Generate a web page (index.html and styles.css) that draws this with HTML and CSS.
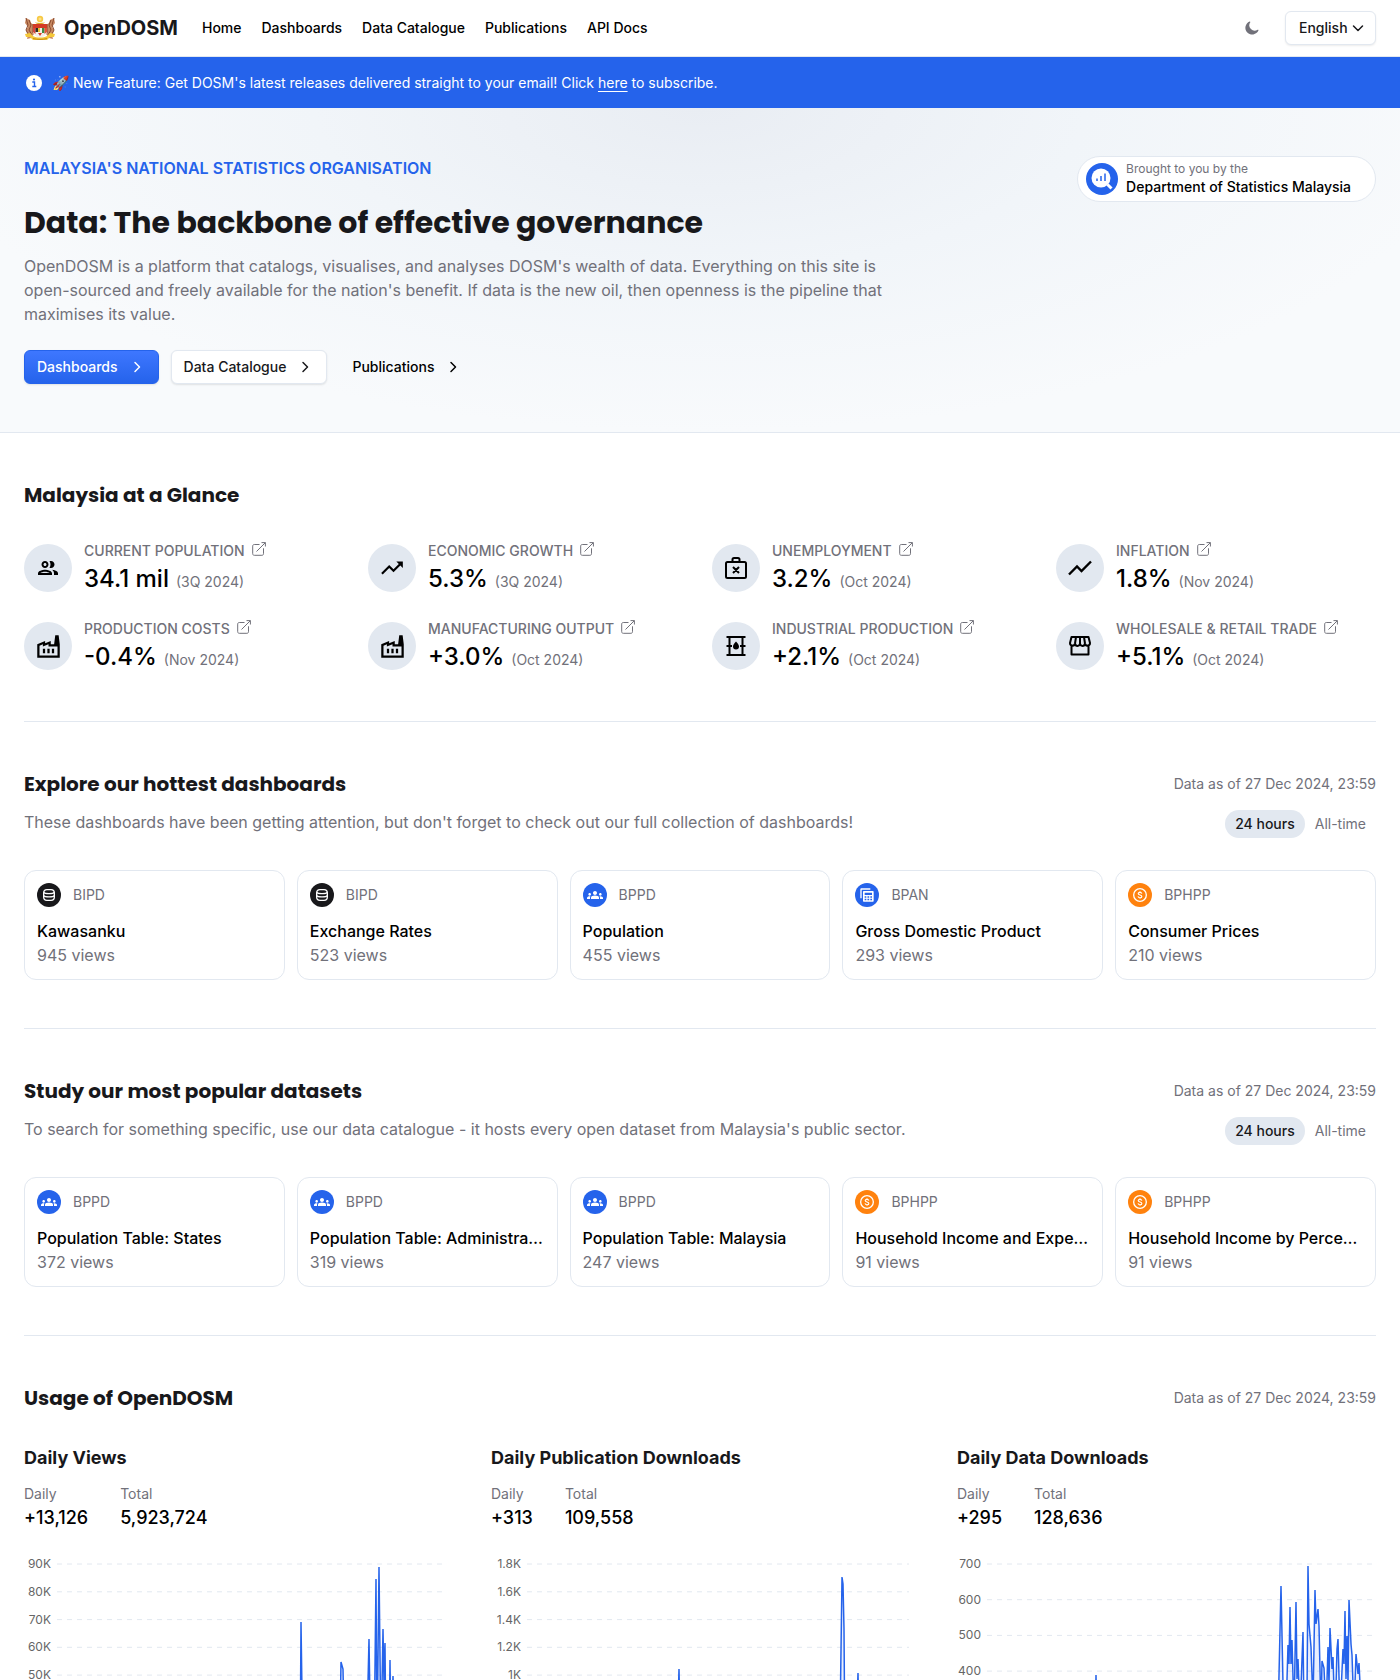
FILE: index.html
```html
<!DOCTYPE html>
<html lang="en">

<head>
    <meta charset="UTF-8">
    <meta name="viewport" content="width=device-width, initial-scale=1.0">
    <title>OpenDOSM</title>
    <link rel="stylesheet" href="styles.css">
</head>

<body>
    <!-- shared icons -->
    <svg class="sprite" aria-hidden="true">
        <symbol id="chevron" viewBox="0 0 20 20">
            <path d="M8 5.5l4.5 4.5L8 14.500" fill="none" stroke="currentColor" stroke-width="1.5" stroke-linecap="round" stroke-linejoin="round" />
        </symbol>
        <symbol id="external" viewBox="0 0 14 14">
            <path d="M7.500 2.500H2.300C1.300 2.500.7 3.100.7 4.100v7.600c0 1 .6 1.600 1.600 1.600h7.600c1 0 1.600-.6 1.600-1.600V6.300M4.500 9.500L13.300.700M9.500.6h3.900v3.900" fill="none" stroke="currentColor" stroke-width="1" />
        </symbol>
        <symbol id="factory" viewBox="0 0 24 24">
            <path d="M22 22H2V10l7-3v2l5-2v3h3l1-8h3l1 8v12zM4 20h16v-8h-8v-2l-5 2v-2l-3 1.300V20zm7-2h2v-4h-2v4zm-4 0h2v-4H7v4zm10-4h-2v4h2v-4z" />
        </symbol>
        <symbol id="database" viewBox="0 0 24 24">
            <rect x="4" y="4" width="16" height="16" rx="5" fill="none" stroke="currentColor" stroke-width="2" />
            <path d="M4 8c2 2.500 14 2.500 16 0M4 13c2 2.500 14 2.500 16 0" fill="none" stroke="currentColor" stroke-width="2" />
        </symbol>
        <symbol id="people" viewBox="0 0 24 24">
            <path d="M12 12.750c1.630 0 3.070.39 4.240.9 1.080.48 1.760 1.560 1.760 2.730V18H6v-1.610c0-1.180.68-2.260 1.760-2.730 1.170-.52 2.610-.91 4.240-.91zM4 13c1.100 0 2-.9 2-2s-.9-2-2-2-2 .9-2 2 .9 2 2 2zm1.130 1.100C4.760 14.040 4.390 14 4 14c-.99 0-1.930.21-2.780.58C.48 14.900 0 15.620 0 16.430V18h4.500v-1.610c0-.83.23-1.610.63-2.290zM20 13c1.100 0 2-.9 2-2s-.9-2-2-2-2 .9-2 2 .9 2 2 2zm4 3.430c0-.81-.48-1.530-1.220-1.850A6.950 6.950 0 0020 14c-.39 0-.76.04-1.130.1.4.68.63 1.460.63 2.290V18H24v-1.570zM12 6c1.660 0 3 1.340 3 3s-1.340 3-3 3-3-1.340-3-3 1.340-3 3-3z" />
        </symbol>
        <symbol id="calculator" viewBox="0 0 24 24">
            <path d="M2 17V3.500C2 2.500 2.500 2 3.500 2H17v2H4v13z" />
            <path fill-rule="evenodd" d="M7.500 6h13c.9 0 1.500.6 1.500 1.500v13c0 .9-.6 1.500-1.500 1.500h-13c-.9 0-1.500-.6-1.500-1.500v-13C6 6.600 6.600 6 7.500 6zM8.500 8.500v3.500h11V8.500zm0 5.500v2h2.500v-2zm4.200 0v2h2.600v-2zm4.300 0v2h2.500v-2zm-8.500 3.800v2H11v-2zm4.200 0v2h2.600v-2zm4.300 0v2h2.500v-2z" />
        </symbol>
        <symbol id="coin" viewBox="0 0 24 24">
            <circle cx="12" cy="12" r="9.500" fill="none" stroke="currentColor" stroke-width="2" />
            <path d="M14.800 9.800c-.3-1.100-1.300-1.800-2.800-1.800s-2.700.7-2.700 1.900c0 2.800 5.500 1.300 5.500 4.200 0 1.300-1.300 2-2.800 2s-2.700-.7-3-2M12 6.200V8M12 16v1.800" fill="none" stroke="currentColor" stroke-width="1.700" />
        </symbol>
    </svg>

    <header class="header">
        <a class="brand" href="#">
            <svg width="32" height="26" viewBox="0 0 32 26" aria-hidden="true">
                <!-- tigers -->
                <path d="M2 3l4 2 1 3 3 2v9l-3 4-4 1 1-4-2-5 2-3-3-4z" fill="#c98a62" />
                <path d="M30 3l-4 2-1 3-3 2v9l3 4 4 1-1-4 2-5-2-3 3-4z" fill="#c98a62" />
                <path d="M2 3l2 7-2 5 2 4M5 5l2 5-2 5 3 5M9 9v9" stroke="#8a4a30" fill="none" />
                <path d="M30 3l-2 7 2 5-2 4M27 5l-2 5 2 5-3 5M23 9v9" stroke="#8a4a30" fill="none" />
                <!-- crescent and star -->
                <path d="M11 7c1 3 9 3 10 0-1 1.200-9 1.200-10 0z" fill="#d9a520" />
                <circle cx="16" cy="4" r="3.200" fill="#f7c945" />
                <circle cx="16" cy="4" r="1.500" fill="#fbe08a" />
                <!-- shield -->
                <path d="M9 9h14v7c0 4-4 6-7 7-3-1-7-3-7-7z" fill="#f5efe8" />
                <path d="M9 9h14v4H9z" fill="#d43a26" />
                <path d="M9 13h2.500v6L9 17z" fill="#d8483a" />
                <path d="M11.500 13H14v4h-2.500z" fill="#2a2a2a" />
                <path d="M14 13h2v4h-2z" fill="#e9c233" />
                <path d="M18 13h2.500v5H18z" fill="#3c8a45" />
                <path d="M20.500 13H23v4l-2.500 2z" fill="#e2553a" />
                <path d="M14 18h4l-2 3z" fill="#d43a26" />
                <!-- ribbon -->
                <path d="M1 19l5-1 3 3c4 2 10 2 14 0l3-3 5 1-1 3h-4l-3 3H9l-3-3H2z" fill="#f5c838" />
                <path d="M9 23.500c4 1.200 10 1.200 14 0" stroke="#c58b16" fill="none" />
            </svg>
            <span>OpenDOSM</span>
        </a>
        <nav class="nav">
            <a href="#">Home</a>
            <a href="#">Dashboards</a>
            <a href="#">Data Catalogue</a>
            <a href="#">Publications</a>
            <a href="#">API Docs</a>
        </nav>
        <div class="header-actions">
            <button class="theme-toggle" type="button" aria-label="Toggle theme">
                <svg width="14" height="14" viewBox="0 0 14 14" aria-hidden="true">
                    <path d="M4.600.5a.6.6 0 01.7.8A5.300 5.300 0 0012.600 8.700a.6.6 0 01.8.8A6.800 6.800 0 114.600.5z" fill="currentColor" />
                </svg>
            </button>
            <div class="language">
                <select aria-label="Language">
                    <option>English</option>
                </select>
                <svg width="12" height="12" viewBox="0 0 12 12" aria-hidden="true">
                    <path d="M1.500 4L6 8.500 10.500 4" fill="none" stroke="currentColor" stroke-width="1.500" stroke-linecap="round" stroke-linejoin="round" />
                </svg>
            </div>
        </div>
    </header>

    <div class="banner">
        <svg width="20" height="20" viewBox="0 0 20 20" aria-hidden="true">
            <circle cx="10" cy="10" r="8" fill="#fff" />
            <circle cx="10" cy="6.500" r="1.100" fill="#2563eb" />
            <path d="M8.300 9h2.200v4.500M8.300 13.500h4" stroke="#2563eb" stroke-width="1.400" fill="none" />
        </svg>
        <p>🚀 New Feature: Get DOSM's latest releases delivered straight to your email! Click <a href="#">here</a> to subscribe.</p>
    </div>

    <section class="hero">
        <div class="hero-content">
            <p class="eyebrow">MALAYSIA'S NATIONAL STATISTICS ORGANISATION</p>
            <h1>Data: The backbone of effective governance</h1>
            <p class="hero-text">OpenDOSM is a platform that catalogs, visualises, and analyses DOSM's wealth of data. Everything on this site is open-sourced and freely available for the nation's benefit. If data is the new oil, then openness is the pipeline that maximises its value.</p>
            <div class="hero-buttons">
                <a class="btn btn-primary" href="#">Dashboards <svg width="20" height="20"><use href="#chevron" /></svg></a>
                <a class="btn btn-default" href="#">Data Catalogue <svg width="20" height="20"><use href="#chevron" /></svg></a>
                <a class="btn" href="#">Publications <svg width="20" height="20"><use href="#chevron" /></svg></a>
            </div>
        </div>
        <a class="agency" href="#">
            <svg width="32" height="32" viewBox="0 0 32 32" aria-hidden="true">
                <circle cx="16" cy="16" r="16" fill="#2563eb" />
                <circle cx="15" cy="15" r="9.500" fill="#fff" />
                <path d="M21.500 21.500l4 4" stroke="#fff" stroke-width="3" />
                <path d="M11 15.500V18M15 13v5M19 10.500V18" stroke="#2563eb" stroke-width="1.500" />
            </svg>
            <span>
                <small>Brought to you by the</small>
                <strong>Department of Statistics Malaysia</strong>
            </span>
        </a>
    </section>

    <main>
        <section class="section">
            <h2>Malaysia at a Glance</h2>
            <div class="stats">
                <div class="stat">
                    <span class="stat-icon">
                        <svg width="24" height="24" viewBox="0 0 24 24"><path d="M9 13.750c-2.340 0-7 1.170-7 3.500V19h14v-1.750c0-2.330-4.660-3.500-7-3.500zM4.340 17c.84-.58 2.870-1.250 4.660-1.250s3.820.67 4.660 1.250H4.340zM9 12c1.930 0 3.500-1.570 3.500-3.500S10.930 5 9 5 5.500 6.570 5.500 8.500 7.070 12 9 12zm0-5c.83 0 1.500.67 1.500 1.500S9.830 10 9 10s-1.500-.67-1.500-1.500S8.170 7 9 7zm7.040 6.810c1.160.84 1.960 1.960 1.960 3.440V19h4v-1.750c0-2.020-3.500-3.170-5.960-3.440zM15 12c1.930 0 3.500-1.570 3.500-3.500S16.930 5 15 5c-.54 0-1.040.13-1.500.35.63.89 1 1.980 1 3.150s-.37 2.260-1 3.150c.46.22.96.35 1.500.35z" /></svg>
                    </span>
                    <div>
                        <p class="stat-label">CURRENT POPULATION <a href="#" aria-label="Open"><svg width="14" height="14"><use href="#external" /></svg></a></p>
                        <p class="stat-value">34.1 mil <span>(3Q 2024)</span></p>
                    </div>
                </div>
                <div class="stat">
                    <span class="stat-icon">
                        <svg width="26" height="26" viewBox="0 0 24 24"><path d="M16 6l2.290 2.290-4.880 4.880-4-4L2 16.590 3.410 18l6-6 4 4 6.300-6.290L22 12V6z" /></svg>
                    </span>
                    <div>
                        <p class="stat-label">ECONOMIC GROWTH <a href="#" aria-label="Open"><svg width="14" height="14"><use href="#external" /></svg></a></p>
                        <p class="stat-value">5.3% <span>(3Q 2024)</span></p>
                    </div>
                </div>
                <div class="stat">
                    <span class="stat-icon">
                        <svg width="24" height="24" viewBox="0 0 24 24"><path d="M3.500 6h17q1.500 0 1.500 1.500v13q0 1.500-1.500 1.500h-17Q2 22 2 20.500v-13Q2 6 3.500 6zM8.500 6V3.500q0-1.500 1.500-1.500h4q1.500 0 1.500 1.500V6M9 11l6 6m0-6l-6 6" fill="none" stroke="#000" stroke-width="2" stroke-linejoin="round" /></svg>
                    </span>
                    <div>
                        <p class="stat-label">UNEMPLOYMENT <a href="#" aria-label="Open"><svg width="14" height="14"><use href="#external" /></svg></a></p>
                        <p class="stat-value">3.2% <span>(Oct 2024)</span></p>
                    </div>
                </div>
                <div class="stat">
                    <span class="stat-icon">
                        <svg width="24" height="24" viewBox="0 0 24 24"><path d="M1 18.500l8-8 4.500 4.500L23 5.500" fill="none" stroke="#000" stroke-width="2.400" /></svg>
                    </span>
                    <div>
                        <p class="stat-label">INFLATION <a href="#" aria-label="Open"><svg width="14" height="14"><use href="#external" /></svg></a></p>
                        <p class="stat-value">1.8% <span>(Nov 2024)</span></p>
                    </div>
                </div>
                <div class="stat">
                    <span class="stat-icon"><svg width="27" height="27"><use href="#factory" /></svg></span>
                    <div>
                        <p class="stat-label">PRODUCTION COSTS <a href="#" aria-label="Open"><svg width="14" height="14"><use href="#external" /></svg></a></p>
                        <p class="stat-value">-0.4% <span>(Nov 2024)</span></p>
                    </div>
                </div>
                <div class="stat">
                    <span class="stat-icon"><svg width="27" height="27"><use href="#factory" /></svg></span>
                    <div>
                        <p class="stat-label">MANUFACTURING OUTPUT <a href="#" aria-label="Open"><svg width="14" height="14"><use href="#external" /></svg></a></p>
                        <p class="stat-value">+3.0% <span>(Oct 2024)</span></p>
                    </div>
                </div>
                <div class="stat">
                    <span class="stat-icon">
                        <svg width="24" height="24" viewBox="0 0 24 24">
                            <path d="M2.500 3h19M2.500 21h19M5.500 3v18M18.500 3v18M2.500 12H8M16 12h5.500" fill="none" stroke="#000" stroke-width="2" />
                            <path d="M12 7.500c1.500 2 3 3.200 3 5a3 3 0 01-6 0c0-1.800 1.500-3 3-5z" />
                        </svg>
                    </span>
                    <div>
                        <p class="stat-label">INDUSTRIAL PRODUCTION <a href="#" aria-label="Open"><svg width="14" height="14"><use href="#external" /></svg></a></p>
                        <p class="stat-value">+2.1% <span>(Oct 2024)</span></p>
                    </div>
                </div>
                <div class="stat">
                    <span class="stat-icon">
                        <svg width="24" height="24" viewBox="0 0 24 24"><path d="M3.500 12v8.500h17V12M3.500 3h17l1.500 6c0 3.200-4.500 3.600-5 .5-.5 3.200-4.700 3.200-5 0-.3 3.200-4.500 3.200-5 0-.5 3.100-5 2.700-5-.5zM8 3L7 9.500M12 3v6.500M16 3l1 6.500" fill="none" stroke="#000" stroke-width="2" stroke-linejoin="round" /></svg>
                    </span>
                    <div>
                        <p class="stat-label">WHOLESALE &amp; RETAIL TRADE <a href="#" aria-label="Open"><svg width="14" height="14"><use href="#external" /></svg></a></p>
                        <p class="stat-value">+5.1% <span>(Oct 2024)</span></p>
                    </div>
                </div>
            </div>
        </section>

        <section class="section">
            <div class="section-row">
                <h2>Explore our hottest dashboards</h2>
                <p class="as-of">Data as of 27 Dec 2024, 23:59</p>
            </div>
            <div class="section-row section-sub">
                <p>These dashboards have been getting attention, but don't forget to check out our full collection of dashboards!</p>
                <div class="tabs">
                    <button class="active" type="button">24 hours</button>
                    <button type="button">All-time</button>
                </div>
            </div>
            <div class="cards">
                <a class="card" href="#">
                    <p class="card-agency"><span class="dot black"><svg width="16" height="16"><use href="#database" /></svg></span>BIPD</p>
                    <h3>Kawasanku</h3>
                    <p class="views">945 views</p>
                </a>
                <a class="card" href="#">
                    <p class="card-agency"><span class="dot black"><svg width="16" height="16"><use href="#database" /></svg></span>BIPD</p>
                    <h3>Exchange Rates</h3>
                    <p class="views">523 views</p>
                </a>
                <a class="card" href="#">
                    <p class="card-agency"><span class="dot blue"><svg width="16" height="16"><use href="#people" /></svg></span>BPPD</p>
                    <h3>Population</h3>
                    <p class="views">455 views</p>
                </a>
                <a class="card" href="#">
                    <p class="card-agency"><span class="dot blue"><svg width="16" height="16"><use href="#calculator" /></svg></span>BPAN</p>
                    <h3>Gross Domestic Product</h3>
                    <p class="views">293 views</p>
                </a>
                <a class="card" href="#">
                    <p class="card-agency"><span class="dot orange"><svg width="16" height="16"><use href="#coin" /></svg></span>BPHPP</p>
                    <h3>Consumer Prices</h3>
                    <p class="views">210 views</p>
                </a>
            </div>
        </section>

        <section class="section">
            <div class="section-row">
                <h2>Study our most popular datasets</h2>
                <p class="as-of">Data as of 27 Dec 2024, 23:59</p>
            </div>
            <div class="section-row section-sub">
                <p>To search for something specific, use our data catalogue - it hosts every open dataset from Malaysia's public sector.</p>
                <div class="tabs">
                    <button class="active" type="button">24 hours</button>
                    <button type="button">All-time</button>
                </div>
            </div>
            <div class="cards">
                <a class="card" href="#">
                    <p class="card-agency"><span class="dot blue"><svg width="16" height="16"><use href="#people" /></svg></span>BPPD</p>
                    <h3>Population Table: States</h3>
                    <p class="views">372 views</p>
                </a>
                <a class="card" href="#">
                    <p class="card-agency"><span class="dot blue"><svg width="16" height="16"><use href="#people" /></svg></span>BPPD</p>
                    <h3>Population Table: Administrative Districts</h3>
                    <p class="views">319 views</p>
                </a>
                <a class="card" href="#">
                    <p class="card-agency"><span class="dot blue"><svg width="16" height="16"><use href="#people" /></svg></span>BPPD</p>
                    <h3>Population Table: Malaysia</h3>
                    <p class="views">247 views</p>
                </a>
                <a class="card" href="#">
                    <p class="card-agency"><span class="dot orange"><svg width="16" height="16"><use href="#coin" /></svg></span>BPHPP</p>
                    <h3>Household Income and Expenditure</h3>
                    <p class="views">91 views</p>
                </a>
                <a class="card" href="#">
                    <p class="card-agency"><span class="dot orange"><svg width="16" height="16"><use href="#coin" /></svg></span>BPHPP</p>
                    <h3>Household Income by Percentile</h3>
                    <p class="views">91 views</p>
                </a>
            </div>
        </section>

        <section class="section">
            <div class="section-row">
                <h2>Usage of OpenDOSM</h2>
                <p class="as-of">Data as of 27 Dec 2024, 23:59</p>
            </div>
            <div class="usage">
                <div>
                    <h3>Daily Views</h3>
                    <dl class="totals">
                        <div><dt>Daily</dt><dd>+13,126</dd></div>
                        <div><dt>Total</dt><dd>5,923,724</dd></div>
                    </dl>
                    <div class="chart">
                        <ul>
                            <li>90K</li><li>80K</li><li>70K</li><li>60K</li><li>50K</li>
                            <li>40K</li><li>30K</li><li>20K</li><li>10K</li><li>0</li>
                        </ul>
                        <svg class="plot" viewBox="0 0 386 250" preserveAspectRatio="none">
                            <path class="grid" d="M0 0H386M0 27.800H386M0 55.600H386M0 83.300H386M0 111.100H386M0 138.900H386M0 166.700H386M0 194.400H386M0 222.200H386M0 250H386" />
                            <path class="line" d="M0 248L60 243L120 240L180 236L240 228L243 210L244 58L246 200L260 222L282 215L284 98L286 105L288 210L309 205L312 75L314 205L317 190L319 15L320 180L322 3L324 180L326 65L327 120L328 79L329 190L332 190L333 96L334 180L336 112L338 200L350 220L386 214V250H0Z" />
                        </svg>
                    </div>
                </div>
                <div>
                    <h3>Daily Publication Downloads</h3>
                    <dl class="totals">
                        <div><dt>Daily</dt><dd>+313</dd></div>
                        <div><dt>Total</dt><dd>109,558</dd></div>
                    </dl>
                    <div class="chart">
                        <ul class="wide">
                            <li>1.8K</li><li>1.6K</li><li>1.4K</li><li>1.2K</li><li>1K</li>
                            <li>800</li><li>600</li><li>400</li><li>200</li><li>0</li>
                        </ul>
                        <svg class="plot" viewBox="0 0 382 250" preserveAspectRatio="none">
                            <path class="grid" d="M0 0H382M0 27.800H382M0 55.600H382M0 83.300H382M0 111.100H382M0 138.900H382M0 166.700H382M0 194.400H382M0 222.200H382M0 250H382" />
                            <path class="line" d="M0 248L50 240L100 230L149 215L152 105L154 210L200 222L260 215L310 205L313 160L315 13L316 20L317 65L318 200L328 205L331 109L333 205L350 218L382 208V250H0Z" />
                        </svg>
                    </div>
                </div>
                <div>
                    <h3>Daily Data Downloads</h3>
                    <dl class="totals">
                        <div><dt>Daily</dt><dd>+295</dd></div>
                        <div><dt>Total</dt><dd>128,636</dd></div>
                    </dl>
                    <div class="chart">
                        <ul class="narrow">
                            <li>700</li><li>600</li><li>500</li><li>400</li>
                            <li>300</li><li>200</li><li>100</li><li>0</li>
                        </ul>
                        <svg class="plot" viewBox="0 0 389 250" preserveAspectRatio="none">
                            <path class="grid" d="M0 0H389M0 35.700H389M0 71.400H389M0 107.100H389M0 142.900H389M0 178.600H389M0 214.300H389M0 250H389" />
                            <path class="line" d="M0 245L50 240L107 225L109 111L111 220L200 225L290 200L294 22L296 120L299 150L301 81L302 100L303 43L304 100L305 76L307 150L309 38L310 115L311 95L313 150L316 68L317 150L320 130L321 2L322 60L324 83L326 140L328 26L329 60L331 45L332 62L334 150L335 97L337 104L339 150L341 83L342 120L343 64L345 105L346 93L348 160L350 85L351 75L353 150L356 85L357 100L358 47L359 115L360 72L361 120L362 36L364 80L365 91L367 150L369 90L371 110L372 99L374 140L389 190V250H0Z" />
                        </svg>
                    </div>
                </div>
            </div>
        </section>
    </main>
</body>

</html>
```
FILE: styles.css
```css
:root {
    --blue: #2563eb;
    --black: #18181b;
    --grey: #71717a;
    --outline: #e2e8f0;
    --washed: #f8fafc;
    --orange: #ff820e;
}

* {
    box-sizing: border-box;
    margin: 0;
    padding: 0;
}

body {
    background-color: #fff;
    color: #000;
    font-family: Inter, sans-serif;
    font-size: 16px;
    line-height: 24px;
}

a {
    color: inherit;
    text-decoration: none;
}

button,
select {
    font: inherit;
    appearance: none;
    background: none;
    border: none;
    cursor: pointer;
}

svg {
    display: block;
    flex-shrink: 0;
    fill: currentColor;
}

.sprite {
    position: absolute;
    width: 0;
    height: 0;
}

/* Header */
.header {
    display: flex;
    align-items: center;
    height: 57px;
    padding: 0 24px;
    border-bottom: 1px solid var(--outline);
    font-size: 14px;
    font-weight: 500;
}

.brand {
    display: flex;
    align-items: center;
    gap: 8px;
    color: var(--black);
    font-size: 20px;
    font-weight: 700;
}

.nav {
    display: flex;
    gap: 20px;
    margin-left: 24px;
}

.header-actions {
    display: flex;
    align-items: center;
    gap: 26px;
    margin-left: auto;
}

.theme-toggle {
    color: var(--grey);
}

.language {
    position: relative;
    color: var(--black);
}

.language select {
    display: block;
    height: 34px;
    padding: 0 27px 0 13px;
    border: 1px solid var(--outline);
    border-radius: 6px;
    background-color: #fff;
    box-shadow: 0 1px 2px rgba(0, 0, 0, 0.08);
    color: inherit;
}

.language svg {
    position: absolute;
    right: 12px;
    top: 11px;
    pointer-events: none;
}

/* Announcement */
.banner {
    display: flex;
    align-items: center;
    gap: 8px;
    height: 51px;
    padding: 0 24px;
    background-color: var(--blue);
    color: #fff;
    font-size: 14px;
    line-height: 20px;
}

.banner a {
    text-decoration: underline;
    text-underline-offset: 3px;
}

/* Hero */
.hero {
    display: flex;
    justify-content: space-between;
    align-items: flex-start;
    padding: 48px 24px;
    border-bottom: 1px solid var(--outline);
    background: radial-gradient(55% 100% at 50% 0%, #e9edf3 0%, #f1f5f9 50%, var(--washed) 100%);
}

.hero-content {
    max-width: 864px;
}

.eyebrow {
    color: var(--blue);
    font-weight: 600;
}

h1 {
    margin: 24px 0 12px;
    color: var(--black);
    font-family: Poppins, Inter, sans-serif;
    font-size: 30px;
    font-weight: 700;
    line-height: 38px;
}

.hero-text {
    color: var(--grey);
}

.hero-buttons {
    display: flex;
    gap: 12px;
    margin-top: 24px;
}

.btn {
    display: flex;
    align-items: center;
    gap: 9px;
    height: 34px;
    padding: 0 11px 0 12px;
    border: 1px solid transparent;
    border-radius: 6px;
    font-size: 14px;
    font-weight: 500;
}

.btn-primary {
    border-color: var(--blue);
    background: linear-gradient(#3e77ff, var(--blue));
    box-shadow: 0 1px 2px rgba(0, 0, 0, 0.1);
    color: #fff;
}

.btn-default {
    border-color: var(--outline);
    background-color: #fff;
    box-shadow: 0 1px 2px rgba(0, 0, 0, 0.1);
    color: var(--black);
}

.agency {
    display: flex;
    align-items: center;
    gap: 8px;
    padding: 4px 24px 4px 8px;
    border: 1px solid var(--outline);
    border-radius: 24px;
    background-color: #fff;
}

.agency small,
.agency strong {
    display: block;
}

.agency small {
    color: var(--grey);
    font-size: 12px;
    line-height: 16px;
}

.agency strong {
    font-size: 14px;
    font-weight: 500;
    line-height: 20px;
}

/* Sections */
main {
    padding: 0 24px;
}

.section {
    padding: 48px 0;
    border-bottom: 1px solid var(--outline);
}

.section:last-child {
    border-bottom: none;
}

h2 {
    color: var(--black);
    font-family: Poppins, Inter, sans-serif;
    font-size: 20px;
    font-weight: 700;
    line-height: 28px;
}

.section-row {
    display: flex;
    justify-content: space-between;
    align-items: center;
}

.section-sub {
    align-items: flex-start;
    margin-top: 12px;
    color: var(--grey);
}

.as-of {
    color: var(--grey);
    font-size: 14px;
}

/* Stats */
.stats {
    display: grid;
    grid-template-columns: repeat(4, 1fr);
    gap: 24px;
    margin-top: 32px;
}

.stat {
    display: flex;
    align-items: center;
    gap: 12px;
}

.stat-icon {
    display: flex;
    align-items: center;
    justify-content: center;
    width: 48px;
    height: 48px;
    border-radius: 50%;
    background-color: var(--outline);
}

.stat-label {
    display: flex;
    gap: 7px;
    color: var(--grey);
    font-size: 14px;
    font-weight: 500;
    line-height: 20px;
}

.stat-label a {
    padding-top: 1px;
}

.stat-value {
    display: flex;
    align-items: baseline;
    gap: 7px;
    margin-top: 2px;
    font-size: 24px;
    font-weight: 500;
    line-height: 32px;
}

.stat-value span {
    color: var(--grey);
    font-size: 14px;
    font-weight: 400;
    line-height: 20px;
}

/* Cards */
.tabs {
    display: flex;
}

.tabs button {
    height: 28px;
    padding: 0 10px;
    border-radius: 14px;
    color: var(--grey);
    font-size: 14px;
}

.tabs .active {
    background-color: var(--outline);
    color: var(--black);
    font-weight: 500;
}

.cards {
    display: grid;
    grid-template-columns: repeat(5, 1fr);
    gap: 12px;
    margin-top: 32px;
}

.card {
    min-width: 0;
    padding: 12px;
    border: 1px solid var(--outline);
    border-radius: 12px;
}

.card-agency {
    display: flex;
    gap: 12px;
    color: var(--grey);
    font-size: 14px;
}

.dot {
    display: flex;
    align-items: center;
    justify-content: center;
    width: 24px;
    height: 24px;
    border-radius: 50%;
    color: #fff;
}

.black {
    background-color: var(--black);
}

.blue {
    background-color: var(--blue);
}

.orange {
    background-color: var(--orange);
}

.card h3 {
    margin-top: 12px;
    overflow: hidden;
    font-size: 16px;
    font-weight: 500;
    text-overflow: ellipsis;
    white-space: nowrap;
}

.views {
    color: var(--grey);
}

/* Usage */
.usage {
    display: grid;
    grid-template-columns: repeat(3, 1fr);
    gap: 48px;
    margin-top: 32px;
}

.usage h3 {
    color: var(--black);
    font-size: 18px;
    font-weight: 700;
    line-height: 28px;
}

.totals {
    display: flex;
    gap: 32px;
    margin-top: 12px;
}

.totals dt {
    color: var(--grey);
    font-size: 14px;
    line-height: 20px;
}

.totals dd {
    font-size: 18px;
    font-weight: 500;
    line-height: 28px;
}

.chart {
    display: flex;
    height: 266px;
    margin-top: 24px;
}

.chart ul {
    display: flex;
    flex-direction: column;
    justify-content: space-between;
    min-width: 33px;
    padding-right: 6px;
    color: #666;
    font-size: 12px;
    line-height: 16px;
    list-style: none;
    text-align: right;
}

.chart .wide {
    min-width: 36px;
}

.chart .narrow {
    min-width: 30px;
}

.plot {
    flex: 1;
    min-width: 0;
    height: 250px;
    margin-top: 8px;
    overflow: visible;
}

.plot path {
    vector-effect: non-scaling-stroke;
}

.grid {
    fill: none;
    stroke: var(--outline);
    stroke-dasharray: 5 5;
}

.line {
    fill: rgba(37, 99, 235, 0.1);
    stroke: var(--blue);
    stroke-width: 1.5;
}
```
